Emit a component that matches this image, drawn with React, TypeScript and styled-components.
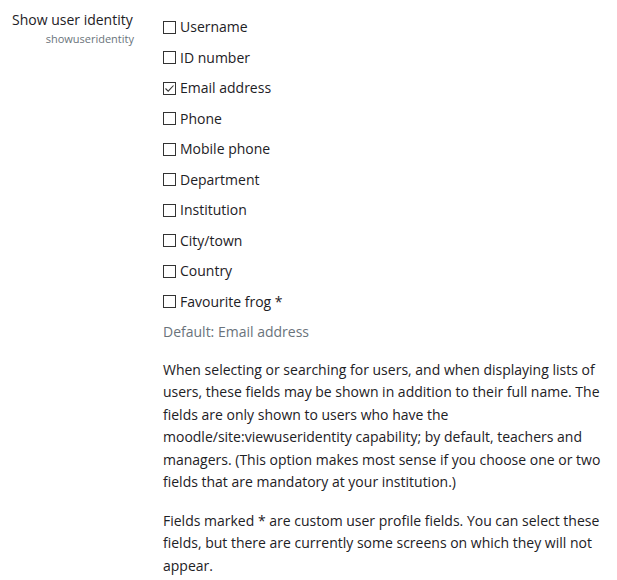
import React from "react";
import styled, { createGlobalStyle } from "styled-components";

const Global = createGlobalStyle`
  html, body { margin: 0; padding: 0; background: #fff; }
  body {
    font-family: "Open Sans", "Noto Sans", sans-serif;
    font-size: 14px;
    color: #1d2125;
  }
`;

const Setting = styled.div`
  display: grid;
  grid-template-columns: 151px 1fr;
  padding: 9px 12px 0 0;
`;

const LabelCol = styled.div`
  display: flex;
  flex-direction: column;
  align-items: flex-end;
  padding-right: 17px;
`;

const Title = styled.label`
  line-height: 22.5px;
  align-self: flex-start;
  padding-left: 12px;
  white-space: nowrap;
`;

const Key = styled.span`
  font-size: 11px;
  line-height: 14px;
  color: #6a737b;
`;

const ContentCol = styled.div`
  display: flex;
  flex-direction: column;
  padding-top: 7px;
  padding-left: 12px;
`;

const Row = styled.label`
  display: flex;
  align-items: center;
  gap: 4px;
  line-height: 22.5px;
  margin-bottom: 8px;
`;

const Box = styled.span`
  box-sizing: border-box;
  width: 13px;
  height: 13px;
  border: 1px solid #333;
  display: inline-flex;
  align-items: center;
  justify-content: center;
  flex: none;
`;

const DefaultText = styled.div`
  line-height: 22.5px;
  color: #6a737b;
`;

const Para = styled.p<{ $top: number }>`
  margin: ${(p) => p.$top}px 0 0 0;
  line-height: 22.5px;
`;

const fields: [string, boolean][] = [
  ["Username", false],
  ["ID number", false],
  ["Email address", true],
  ["Phone", false],
  ["Mobile phone", false],
  ["Department", false],
  ["Institution", false],
  ["City/town", false],
  ["Country", false],
  ["Favourite frog *", false],
];

export default function App() {
  return (
    <>
      <Global />
      <Setting>
        <LabelCol>
          <Title>Show user identity</Title>
          <Key>showuseridentity</Key>
        </LabelCol>
        <ContentCol>
          {fields.map(([name, checked]) => (
            <Row key={name}>
              <Box>
                {checked && (
                  <svg width="11" height="11" viewBox="0 0 11 11">
                    <path d="M1.5 5.5 L4.2 8.2 L9.5 2.5" fill="none" stroke="#333" strokeWidth="1.1" />
                  </svg>
                )}
              </Box>
              {name}
            </Row>
          ))}
          <DefaultText>Default: Email address</DefaultText>
          <Para $top={15}>
            When selecting or searching for users, and when displaying lists of users, these fields may be shown in
            addition to their full name. The fields are only shown to users who have the
            moodle/site:viewuseridentity capability; by default, teachers and managers. (This option makes most sense
            if you choose one or two fields that are mandatory at your institution.)
          </Para>
          <Para $top={16}>
            Fields marked * are custom user profile fields. You can select these fields, but there are currently some
            screens on which they will not appear.
          </Para>
        </ContentCol>
      </Setting>
    </>
  );
}
